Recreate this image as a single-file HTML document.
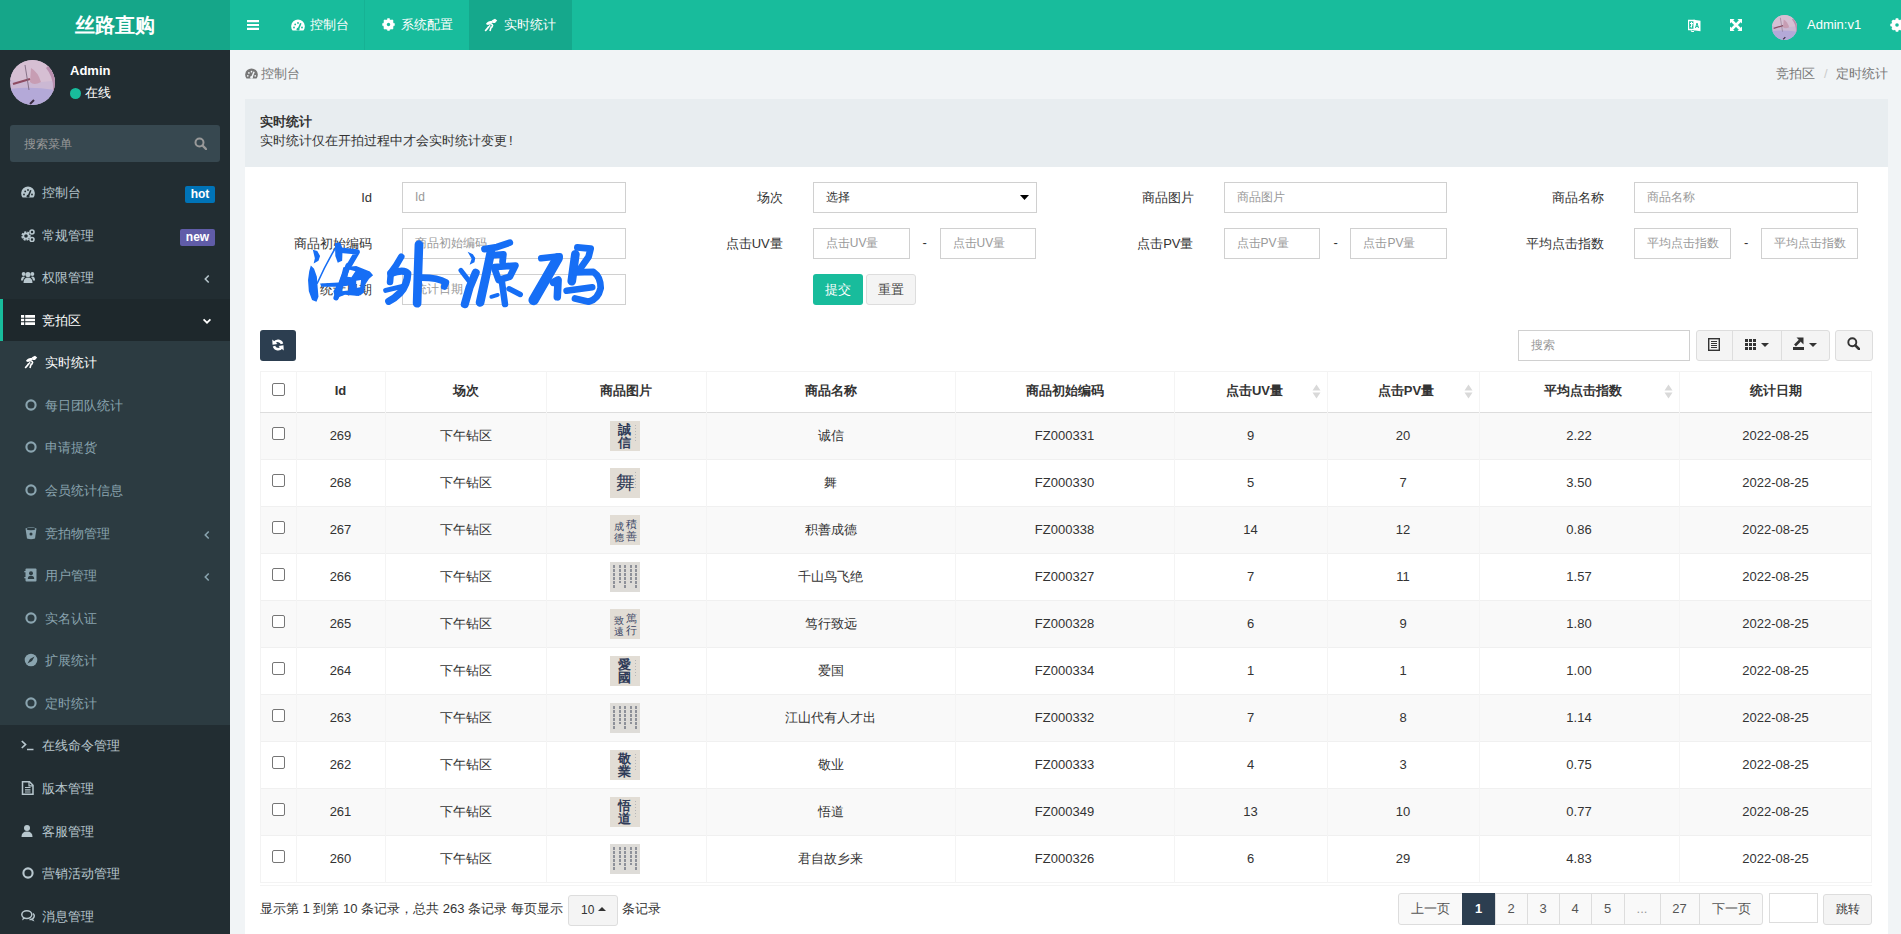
<!DOCTYPE html><html><head><meta charset="utf-8"><style>
*{box-sizing:border-box;margin:0;padding:0}
html,body{width:1901px;height:934px;overflow:hidden}
body{font-family:"Liberation Sans",sans-serif;font-size:13px;color:#333;background:#f1f4f6;position:relative;line-height:1.42857}
.a{position:absolute}
svg{display:block;position:absolute}
#logo{left:0;top:0;width:230px;height:50px;background:#15a689;color:#fff;font-size:20px;font-weight:bold;text-align:center;line-height:50px}
#nav{left:230px;top:0;width:1671px;height:50px;background:#18bc9c;color:#fff}
.tx{position:absolute;white-space:nowrap;line-height:20px}
#side{left:0;top:50px;width:230px;height:884px;background:#222d32}
.sm{color:#b8c7ce}
.badge{position:absolute;height:17px;line-height:17px;padding:0 4px;font-size:12px;font-weight:bold;color:#fff;border-radius:2px;text-align:center}
#panel{left:245px;top:99px;width:1643px;height:840px;background:#fff}
.lbl{position:absolute;text-align:right;line-height:31px;white-space:nowrap;color:#333}
.inp{position:absolute;height:31px;border:1px solid #d0d0d0;background:#fff;color:#999;line-height:29px;padding-left:12px;font-size:12px;white-space:nowrap;overflow:hidden}
.btn{position:absolute;border-radius:3px;text-align:center;white-space:nowrap}
table{border-collapse:collapse;table-layout:fixed;position:absolute}
td,th{text-align:center;vertical-align:middle;border-left:1px solid #f0f0f0;padding:0;white-space:nowrap}
th{font-weight:bold;height:41px}
td{height:47px}
tr.odd td{background:#f9f9f9}
tbody td{border-top:1px solid #eee}
.cb{display:inline-block;width:13px;height:13px;border:1px solid #767676;border-radius:2px;background:#fff;vertical-align:middle}
.thumb{display:inline-block;width:30px;height:30px;background:#ddd5c8;vertical-align:middle;position:relative;overflow:hidden}
.pg{position:absolute;top:893px;height:32px;line-height:30px;border:1px solid #ddd;background:#f4f4f4;color:#555;text-align:center}
</style></head><body>
<div id="logo" class="a">丝路直购</div>
<div id="nav" class="a">
<svg class="a" style="left:17px;top:20px" width="12" height="10" viewBox="0 0 12 10"><path d="M0 1.1H12M0 5H12M0 8.9H12" stroke="#fff" stroke-width="2.2"/></svg>
<div class="a" style="left:134px;top:0;width:1px;height:50px;background:rgba(0,0,0,0.05)"></div>
<div class="a" style="left:239px;top:0;width:103px;height:50px;background:rgba(0,0,0,0.1)"></div>
<svg class="a" style="left:61px;top:18px" width="14" height="14" viewBox="0 0 14 14"><path d="M1.6 12.5 A6.8 6.8 0 1 1 12.4 12.5 Z" fill="#fff"/><path d="M7 12 L9.8 5.2" stroke="#18bc9c" stroke-width="1.6"/><circle cx="7" cy="11.2" r="1.4" fill="#18bc9c"/><circle cx="3" cy="9.5" r="0.9" fill="#18bc9c"/><circle cx="4.2" cy="6.4" r="0.9" fill="#18bc9c"/><circle cx="7" cy="5" r="0.9" fill="#18bc9c"/><circle cx="11" cy="9.5" r="0.9" fill="#18bc9c"/></svg>
<div class="a tx" style="left:80px;top:15px;color:#fff">控制台</div>
<svg class="a" style="left:152px;top:18px" width="13" height="13" viewBox="0 0 14 14"><circle cx="7" cy="7" r="4.2" fill="none" stroke="#fff" stroke-width="3"/><path d="M7 0.3V13.7M0.3 7H13.7M2.3 2.3L11.7 11.7M11.7 2.3L2.3 11.7" stroke="#fff" stroke-width="2.6"/><circle cx="7" cy="7" r="1.8" fill="#18bc9c"/></svg>
<div class="a tx" style="left:171px;top:15px;color:#fff">系统配置</div>
<svg class="a" style="left:254px;top:18px" width="14" height="14" viewBox="0 0 14 14"><path d="M2.8 6.5 Q4.5 3.8 8.5 3.8" fill="none" stroke="#fff" stroke-width="2.2"/><path d="M8 2.2 L11 0.8 L13.2 2.6 L11 5 L8.5 5Z" fill="#fff"/><path d="M4 6 Q8.5 5 8.6 7.6 Q8 9.6 6.8 10 L6 13" fill="none" stroke="#fff" stroke-width="1.6"/><path d="M5 8.2 Q3.5 10.5 1.2 13" fill="none" stroke="#fff" stroke-width="1.7"/><path d="M5.2 7.2 Q6.5 7.8 5.5 9" fill="none" stroke="#fff" stroke-width="1.2"/></svg>
<div class="a tx" style="left:274px;top:15px;color:#fff">实时统计</div>
<svg class="a" style="left:1458px;top:19px" width="13" height="13" viewBox="0 0 13 13"><path d="M0.5 1.5H6.5V10.5H0.5Z" fill="none" stroke="#fff" stroke-width="1.3"/><path d="M5.5 0.8L12.5 1.8V12.2L5.5 11.2Z" fill="#fff"/><path d="M2 4.5H5 M3.5 3V8.5 M2.2 8.2L4.8 5.5" stroke="#fff" stroke-width="1"/><path d="M7.5 9L9 4L10.5 9M8 7.5H10" fill="none" stroke="#18bc9c" stroke-width="1"/><path d="M3 11.5Q4 13 6 12.5" fill="none" stroke="#fff" stroke-width="1.2"/></svg>
<svg class="a" style="left:1500px;top:19px" width="12" height="12" viewBox="0 0 12 12"><path d="M0 0H4.6L0 4.6Z M12 0H7.4L12 4.6Z M0 12H4.6L0 7.4Z M12 12H7.4L12 7.4Z" fill="#fff"/><path d="M1.5 1.5L10.5 10.5M10.5 1.5L1.5 10.5" stroke="#fff" stroke-width="2.6"/></svg>
<svg class="a" style="left:1542px;top:15px" width="25" height="25" viewBox="0 0 45 45"><defs><clipPath id="avc1542"><circle cx="22.5" cy="22.5" r="22.5"/></clipPath></defs><g clip-path="url(#avc1542)"><rect width="45" height="45" fill="#cbb8d3"/><path d="M0 0H45V20Q30 24 0 20Z" fill="#d6bfd3"/><path d="M0 29Q20 26 45 30V45H0Z" fill="#b4a9d8"/><path d="M36 8Q46 20 42 38L45 45V0Z" fill="#b98fae"/><path d="M21 8Q28 12 31 22Q24 26 20 22Z" fill="#c79db3"/><path d="M3 24L20 19" stroke="#8d4c62" stroke-width="2.2"/><path d="M15 5L19 30" stroke="#7e6a80" stroke-width="0.9"/><path d="M20 44L24 40" stroke="#3a2a3e" stroke-width="2"/></g></svg>
<div class="a tx" style="left:1577px;top:15px;color:#fff;font-size:13px">Admin:v1</div>
<svg class="a" style="left:1660px;top:18px" width="14" height="14" viewBox="0 0 14 14"><circle cx="7" cy="7" r="4.2" fill="none" stroke="#fff" stroke-width="3"/><path d="M7 0.3V13.7M0.3 7H13.7M2.3 2.3L11.7 11.7M11.7 2.3L2.3 11.7" stroke="#fff" stroke-width="2.6"/><circle cx="7" cy="7" r="1.8" fill="#18bc9c"/></svg>
</div>
<div id="side" class="a">
<svg class="a" style="left:10px;top:10px" width="45" height="45" viewBox="0 0 45 45"><defs><clipPath id="avc10"><circle cx="22.5" cy="22.5" r="22.5"/></clipPath></defs><g clip-path="url(#avc10)"><rect width="45" height="45" fill="#cbb8d3"/><path d="M0 0H45V20Q30 24 0 20Z" fill="#d6bfd3"/><path d="M0 29Q20 26 45 30V45H0Z" fill="#b4a9d8"/><path d="M36 8Q46 20 42 38L45 45V0Z" fill="#b98fae"/><path d="M21 8Q28 12 31 22Q24 26 20 22Z" fill="#c79db3"/><path d="M3 24L20 19" stroke="#8d4c62" stroke-width="2.2"/><path d="M15 5L19 30" stroke="#7e6a80" stroke-width="0.9"/><path d="M20 44L24 40" stroke="#3a2a3e" stroke-width="2"/></g></svg>
<div class="a tx" style="left:70px;top:11px;color:#fff;font-weight:bold;font-size:13px">Admin</div>
<div class="a" style="left:70px;top:38px;width:11px;height:11px;border-radius:50%;background:#18bc9c"></div>
<div class="a tx" style="left:85px;top:33px;color:#fff;font-size:13px">在线</div>
<div class="a" style="left:10px;top:75px;width:210px;height:37px;background:#374850;border-radius:3px"></div>
<div class="a tx" style="left:24px;top:84px;color:#999;font-size:12px">搜索菜单</div>
<svg class="a" style="left:194px;top:87px" width="13" height="13" viewBox="0 0 13 13"><circle cx="5.5" cy="5.5" r="4" fill="none" stroke="#999" stroke-width="2"/><path d="M8.5 8.5 L12 12" stroke="#999" stroke-width="2.4" stroke-linecap="round"/></svg>
<div class="a tx" style="left:42px;top:132.99px;color:#b8c7ce;font-weight:normal">控制台</div>
<svg class="a" style="left:21px;top:135px" width="14" height="14" viewBox="0 0 14 14"><path d="M1.6 12.5 A6.8 6.8 0 1 1 12.4 12.5 Z" fill="#b8c7ce"/><path d="M7 12 L9.8 5.2" stroke="#222d32" stroke-width="1.6"/><circle cx="7" cy="11.2" r="1.4" fill="#222d32"/><circle cx="3" cy="9.5" r="0.9" fill="#222d32"/><circle cx="4.2" cy="6.4" r="0.9" fill="#222d32"/><circle cx="7" cy="5" r="0.9" fill="#222d32"/><circle cx="11" cy="9.5" r="0.9" fill="#222d32"/></svg>
<div class="badge" style="left:185px;top:135.99px;width:30px;background:#0073b7">hot</div>
<div class="a tx" style="left:42px;top:175.56px;color:#b8c7ce;font-weight:normal">常规管理</div>
<svg class="a" style="left:21px;top:178px" width="14" height="14" viewBox="0 0 14 14"><circle cx="5" cy="8" r="3.4" fill="none" stroke="#b8c7ce" stroke-width="2.6" stroke-dasharray="1.8 1"/><circle cx="5" cy="8" r="2.6" fill="none" stroke="#b8c7ce" stroke-width="1.6"/><circle cx="11" cy="4" r="2" fill="none" stroke="#b8c7ce" stroke-width="1.6"/><circle cx="11" cy="11.5" r="2" fill="none" stroke="#b8c7ce" stroke-width="1.6"/></svg>
<div class="badge" style="left:180px;top:178.56px;width:35px;background:#605ca8">new</div>
<div class="a tx" style="left:42px;top:218.12px;color:#b8c7ce;font-weight:normal">权限管理</div>
<svg class="a" style="left:21px;top:220px" width="14" height="14" viewBox="0 0 14 14"><circle cx="7" cy="4.5" r="2.6" fill="#b8c7ce"/><path d="M2.5 13 Q2.5 7.5 7 7.5 Q11.5 7.5 11.5 13Z" fill="#b8c7ce"/><circle cx="2.6" cy="4" r="1.9" fill="#b8c7ce"/><circle cx="11.4" cy="4" r="1.9" fill="#b8c7ce"/><path d="M0 10.5 Q0 6.5 2.6 6.5 L4 7 Q2 8.5 2 10.5Z" fill="#b8c7ce"/><path d="M14 10.5 Q14 6.5 11.4 6.5 L10 7 Q12 8.5 12 10.5Z" fill="#b8c7ce"/></svg>
<svg class="a" style="left:201px;top:223px" width="12" height="12" viewBox="0 0 14 14"><path d="M9 3 L5 7 L9 11" fill="none" stroke="#b8c7ce" stroke-width="1.8"/></svg>
<div class="a" style="left:0;top:249.41px;width:230px;height:42.07px;background:#1e282c;border-left:3px solid #18bc9c"></div>
<div class="a tx" style="left:42px;top:260.70px;color:#fff;font-weight:normal">竞拍区</div>
<svg class="a" style="left:21px;top:263px" width="14" height="14" viewBox="0 0 14 14"><path d="M0 2h3.2v2.7h-3.2zM4.2 2h9.8v2.7h-9.8zM0 5.65h3.2v2.7h-3.2zM4.2 5.65h9.8v2.7h-9.8zM0 9.3h3.2v2.7h-3.2zM4.2 9.3h9.8v2.7h-9.8z" fill="#fff"/></svg>
<svg class="a" style="left:201px;top:265px" width="12" height="12" viewBox="0 0 14 14"><path d="M3 5 L7 9 L11 5" fill="none" stroke="#fff" stroke-width="2"/></svg>
<div class="a" style="left:0;top:290.98px;width:230px;height:43.07px;background:#2c3b41"></div>
<div class="a tx" style="left:45px;top:303.27px;color:#fff;font-weight:normal">实时统计</div>
<svg class="a" style="left:24px;top:305px" width="14" height="14" viewBox="0 0 14 14"><path d="M2.8 6.5 Q4.5 3.8 8.5 3.8" fill="none" stroke="#fff" stroke-width="2.2"/><path d="M8 2.2 L11 0.8 L13.2 2.6 L11 5 L8.5 5Z" fill="#fff"/><path d="M4 6 Q8.5 5 8.6 7.6 Q8 9.6 6.8 10 L6 13" fill="none" stroke="#fff" stroke-width="1.6"/><path d="M5 8.2 Q3.5 10.5 1.2 13" fill="none" stroke="#fff" stroke-width="1.7"/><path d="M5.2 7.2 Q6.5 7.8 5.5 9" fill="none" stroke="#fff" stroke-width="1.2"/></svg>
<div class="a" style="left:0;top:333.55px;width:230px;height:43.07px;background:#2c3b41"></div>
<div class="a tx" style="left:45px;top:345.84px;color:#8aa4af;font-weight:normal">每日团队统计</div>
<svg class="a" style="left:24px;top:348px" width="14" height="14" viewBox="0 0 14 14"><circle cx="7" cy="7" r="4.6" fill="none" stroke="#8aa4af" stroke-width="2.1"/></svg>
<div class="a" style="left:0;top:376.12px;width:230px;height:43.07px;background:#2c3b41"></div>
<div class="a tx" style="left:45px;top:388.41px;color:#8aa4af;font-weight:normal">申请提货</div>
<svg class="a" style="left:24px;top:390px" width="14" height="14" viewBox="0 0 14 14"><circle cx="7" cy="7" r="4.6" fill="none" stroke="#8aa4af" stroke-width="2.1"/></svg>
<div class="a" style="left:0;top:418.69px;width:230px;height:43.07px;background:#2c3b41"></div>
<div class="a tx" style="left:45px;top:430.98px;color:#8aa4af;font-weight:normal">会员统计信息</div>
<svg class="a" style="left:24px;top:433px" width="14" height="14" viewBox="0 0 14 14"><circle cx="7" cy="7" r="4.6" fill="none" stroke="#8aa4af" stroke-width="2.1"/></svg>
<div class="a" style="left:0;top:461.26px;width:230px;height:43.07px;background:#2c3b41"></div>
<div class="a tx" style="left:45px;top:473.55px;color:#8aa4af;font-weight:normal">竞拍物管理</div>
<svg class="a" style="left:24px;top:476px" width="14" height="14" viewBox="0 0 14 14"><path d="M1.5 2.5 Q7 0 12.5 2.5 L11 12.5 Q7 14 3 12.5Z" fill="#8aa4af"/><ellipse cx="7" cy="3" rx="4.3" ry="1.2" fill="#2c3b41"/><circle cx="7" cy="8" r="1.5" fill="#2c3b41"/></svg>
<svg class="a" style="left:201px;top:479px" width="12" height="12" viewBox="0 0 14 14"><path d="M9 3 L5 7 L9 11" fill="none" stroke="#8aa4af" stroke-width="1.8"/></svg>
<div class="a" style="left:0;top:503.83px;width:230px;height:43.07px;background:#2c3b41"></div>
<div class="a tx" style="left:45px;top:516.12px;color:#8aa4af;font-weight:normal">用户管理</div>
<svg class="a" style="left:24px;top:518px" width="14" height="14" viewBox="0 0 14 14"><rect x="1.5" y="0.5" width="11" height="13" rx="1" fill="#8aa4af"/><circle cx="7" cy="5.2" r="2" fill="#2c3b41"/><path d="M3.8 11 Q3.8 7.8 7 7.8 Q10.2 7.8 10.2 11Z" fill="#2c3b41"/><rect x="0.3" y="3" width="2" height="1.3" fill="#8aa4af"/><rect x="0.3" y="9" width="2" height="1.3" fill="#8aa4af"/></svg>
<svg class="a" style="left:201px;top:521px" width="12" height="12" viewBox="0 0 14 14"><path d="M9 3 L5 7 L9 11" fill="none" stroke="#8aa4af" stroke-width="1.8"/></svg>
<div class="a" style="left:0;top:546.40px;width:230px;height:43.07px;background:#2c3b41"></div>
<div class="a tx" style="left:45px;top:558.68px;color:#8aa4af;font-weight:normal">实名认证</div>
<svg class="a" style="left:24px;top:561px" width="14" height="14" viewBox="0 0 14 14"><circle cx="7" cy="7" r="4.6" fill="none" stroke="#8aa4af" stroke-width="2.1"/></svg>
<div class="a" style="left:0;top:588.97px;width:230px;height:43.07px;background:#2c3b41"></div>
<div class="a tx" style="left:45px;top:601.25px;color:#8aa4af;font-weight:normal">扩展统计</div>
<svg class="a" style="left:24px;top:603px" width="14" height="14" viewBox="0 0 14 14"><circle cx="7" cy="7" r="6.3" fill="#8aa4af"/><path d="M10.5 3.5 L8 8 L3.5 10.5 L6 6Z" fill="#2c3b41"/></svg>
<div class="a" style="left:0;top:631.54px;width:230px;height:43.07px;background:#2c3b41"></div>
<div class="a tx" style="left:45px;top:643.83px;color:#8aa4af;font-weight:normal">定时统计</div>
<svg class="a" style="left:24px;top:646px" width="14" height="14" viewBox="0 0 14 14"><circle cx="7" cy="7" r="4.6" fill="none" stroke="#8aa4af" stroke-width="2.1"/></svg>
<div class="a tx" style="left:42px;top:686.39px;color:#b8c7ce;font-weight:normal">在线命令管理</div>
<svg class="a" style="left:21px;top:688px" width="14" height="14" viewBox="0 0 14 14"><path d="M0.8 3 L4.5 6.5 L0.8 10" fill="none" stroke="#b8c7ce" stroke-width="1.7"/><path d="M6 11.5 H12.5" stroke="#b8c7ce" stroke-width="1.5"/></svg>
<div class="a tx" style="left:42px;top:728.97px;color:#b8c7ce;font-weight:normal">版本管理</div>
<svg class="a" style="left:21px;top:731px" width="14" height="14" viewBox="0 0 14 14"><path d="M1.5 0.8 H8.5 L12 4.3 V13.2 H1.5Z" fill="none" stroke="#b8c7ce" stroke-width="1.5"/><path d="M4 6.5 H9.5 M4 8.8 H9.5 M4 11 H9.5" stroke="#b8c7ce" stroke-width="1.2"/><path d="M8 1 V4.8 H12" fill="none" stroke="#b8c7ce" stroke-width="1.2"/></svg>
<div class="a tx" style="left:42px;top:771.53px;color:#b8c7ce;font-weight:normal">客服管理</div>
<svg class="a" style="left:21px;top:774px" width="14" height="14" viewBox="0 0 14 14"><circle cx="6" cy="4" r="3" fill="#b8c7ce"/><path d="M0.5 13 Q0.5 7.5 6 7.5 Q11.5 7.5 11.5 13Z" fill="#b8c7ce"/></svg>
<div class="a tx" style="left:42px;top:814.11px;color:#b8c7ce;font-weight:normal">营销活动管理</div>
<svg class="a" style="left:21px;top:816px" width="14" height="14" viewBox="0 0 14 14"><circle cx="7" cy="7" r="4.6" fill="none" stroke="#b8c7ce" stroke-width="2.1"/></svg>
<div class="a tx" style="left:42px;top:856.68px;color:#b8c7ce;font-weight:normal">消息管理</div>
<svg class="a" style="left:21px;top:859px" width="14" height="14" viewBox="0 0 14 14"><ellipse cx="5.8" cy="5.6" rx="5" ry="3.9" fill="none" stroke="#b8c7ce" stroke-width="1.5"/><path d="M2 8.5 L1 11.5 L4.5 9.2" fill="#b8c7ce"/><path d="M8.5 10.5 Q12 10.8 13 8 Q13.8 6 12 4.5" fill="none" stroke="#b8c7ce" stroke-width="1.5"/><path d="M12 10 L13.5 12.5 L10 11" fill="#b8c7ce"/></svg>
</div>
<svg class="a" style="left:245px;top:67px" width="13" height="13" viewBox="0 0 14 14"><path d="M1.6 12.5 A6.8 6.8 0 1 1 12.4 12.5 Z" fill="#777"/><path d="M7 12 L9.8 5.2" stroke="#f1f4f6" stroke-width="1.6"/><circle cx="7" cy="11.2" r="1.4" fill="#f1f4f6"/><circle cx="3" cy="9.5" r="0.9" fill="#f1f4f6"/><circle cx="4.2" cy="6.4" r="0.9" fill="#f1f4f6"/><circle cx="7" cy="5" r="0.9" fill="#f1f4f6"/><circle cx="11" cy="9.5" r="0.9" fill="#f1f4f6"/></svg>
<div class="a tx" style="left:261px;top:64px;color:#777">控制台</div>
<div class="a tx" style="left:1776px;top:64px;color:#777">竞拍区<span style="color:#ccc;padding:0 8px 0 9px">/</span>定时统计</div>
<div id="panel" class="a">
<div class="a" style="left:0;top:0;width:1643px;height:68px;background:#e8edf0"></div>
<div class="a tx" style="left:15px;top:13px;font-weight:bold;color:#333">实时统计</div>
<div class="a tx" style="left:15px;top:32px;color:#333">实时统计仅在开拍过程中才会实时统计变更<span style="margin-left:2px">!</span></div>
<div class="lbl" style="right:1516px;top:83px">Id</div>
<div class="inp" style="left:157.00px;top:83px;width:223.75px">Id</div>
<div class="lbl" style="right:1105.25px;top:83px">场次</div>
<div class="inp" style="left:567.75px;top:83px;width:223.75px"><span style="color:#333">选择</span><svg class="a" style="right:7px;top:12px" width="9" height="5" viewBox="0 0 9 5"><path d="M0 0H9L4.5 5Z" fill="#000"/></svg></div>
<div class="lbl" style="right:694.5px;top:83px">商品图片</div>
<div class="inp" style="left:978.50px;top:83px;width:223.75px">商品图片</div>
<div class="lbl" style="right:283.75px;top:83px">商品名称</div>
<div class="inp" style="left:1389.25px;top:83px;width:223.75px">商品名称</div>
<div class="lbl" style="right:1516px;top:129px">商品初始编码</div>
<div class="inp" style="left:157.00px;top:129px;width:223.75px">商品初始编码</div>
<div class="lbl" style="right:1105.25px;top:129px">点击UV量</div>
<div class="inp" style="left:567.75px;top:129px;width:96.88px">点击UV量</div>
<div class="inp" style="left:694.62px;top:129px;width:96.88px">点击UV量</div>
<div class="a tx" style="left:677.62px;top:134px;color:#333">-</div>
<div class="lbl" style="right:694.5px;top:129px">点击PV量</div>
<div class="inp" style="left:978.50px;top:129px;width:96.88px">点击PV量</div>
<div class="inp" style="left:1105.38px;top:129px;width:96.88px">点击PV量</div>
<div class="a tx" style="left:1088.38px;top:134px;color:#333">-</div>
<div class="lbl" style="right:283.75px;top:129px">平均点击指数</div>
<div class="inp" style="left:1389.25px;top:129px;width:96.88px">平均点击指数</div>
<div class="inp" style="left:1516.12px;top:129px;width:96.88px">平均点击指数</div>
<div class="a tx" style="left:1499.12px;top:134px;color:#333">-</div>
<div class="lbl" style="right:1516px;top:175px">统计日期</div>
<div class="inp" style="left:157.00px;top:175px;width:223.75px">统计日期</div>
<div class="btn" style="left:568px;top:175px;width:50px;height:31px;line-height:31px;background:#18bc9c;color:#fff">提交</div>
<div class="btn" style="left:621px;top:175px;width:50px;height:31px;line-height:29px;background:#f4f4f4;border:1px solid #ddd;color:#444">重置</div>
</div>
<div class="a" style="left:0;top:0">
<div class="a" style="left:260px;top:330px;width:36px;height:31px;background:#2c3e50;border-radius:3px"></div>
<svg class="a" style="left:272px;top:339px" width="12" height="12" viewBox="0 0 12 12"><path d="M10 4.8 A4.2 4.2 0 0 0 2.4 3.8" fill="none" stroke="#fff" stroke-width="2.6"/><path d="M0.3 0.5 L0.5 5.8 L5.5 5Z" fill="#fff"/><path d="M2 7.2 A4.2 4.2 0 0 0 9.6 8.2" fill="none" stroke="#fff" stroke-width="2.6"/><path d="M11.7 11.5 L11.5 6.2 L6.5 7Z" fill="#fff"/></svg>
<div class="inp" style="left:1518px;top:330px;width:172px;height:31px;padding-left:12px">搜索</div>
<div class="a" style="left:1696px;top:330px;width:134px;height:31px;background:#f4f4f4;border:1px solid #ddd;border-radius:3px"></div>
<div class="a" style="left:1732px;top:331px;width:1px;height:29px;background:#ddd"></div>
<div class="a" style="left:1781px;top:331px;width:1px;height:29px;background:#ddd"></div>
<div class="a" style="left:1835px;top:330px;width:38px;height:31px;background:#f4f4f4;border:1px solid #ddd;border-radius:3px"></div>
<svg class="a" style="left:1708px;top:338px" width="12" height="13" viewBox="0 0 12 13"><rect x="0.7" y="0.7" width="10.6" height="11.6" fill="none" stroke="#333" stroke-width="1.4"/><path d="M3 3.5H9M3 5.5H9M3 7.5H9M3 9.5H9" stroke="#333" stroke-width="1"/></svg>
<svg class="a" style="left:1745px;top:339px" width="11" height="11" viewBox="0 0 11 11"><path d="M0 0h3v3h-3zM4 0h3v3h-3zM8 0h3v3h-3zM0 4h3v3h-3zM4 4h3v3h-3zM8 4h3v3h-3zM0 8h3v3h-3zM4 8h3v3h-3zM8 8h3v3h-3z" fill="#333"/></svg>
<svg class="a" style="left:1761px;top:343px" width="8" height="4" viewBox="0 0 8 4"><path d="M0 0H8L4 4Z" fill="#333"/></svg>
<svg class="a" style="left:1793px;top:337px" width="12" height="13" viewBox="0 0 12 13"><path d="M0 10H11V13H0Z" fill="#333"/><path d="M2 8.5 L7 3.5" stroke="#333" stroke-width="2.6"/><path d="M3.5 0.5H10.5V7.5Z" fill="#333"/></svg>
<svg class="a" style="left:1809px;top:343px" width="8" height="4" viewBox="0 0 8 4"><path d="M0 0H8L4 4Z" fill="#333"/></svg>
<svg class="a" style="left:1847px;top:337px" width="13" height="13" viewBox="0 0 13 13"><circle cx="5.3" cy="5.3" r="4" fill="none" stroke="#333" stroke-width="1.9"/><path d="M8.3 8.3L12 12" stroke="#333" stroke-width="2.6" stroke-linecap="round"/></svg>
<div class="a" style="left:260px;top:371px;width:1612px;height:512px;background:#fff;border:1px solid #f3f3f3"></div>
<div class="a" style="left:261px;top:413px;width:1610px;height:46px;background:#f9f9f9"></div>
<div class="a" style="left:261px;top:459px;width:1610px;height:1px;background:#f0f0f0"></div>
<div class="a" style="left:261px;top:507px;width:1610px;height:46px;background:#f9f9f9"></div>
<div class="a" style="left:261px;top:506px;width:1610px;height:1px;background:#f0f0f0"></div>
<div class="a" style="left:261px;top:553px;width:1610px;height:1px;background:#f0f0f0"></div>
<div class="a" style="left:261px;top:601px;width:1610px;height:46px;background:#f9f9f9"></div>
<div class="a" style="left:261px;top:600px;width:1610px;height:1px;background:#f0f0f0"></div>
<div class="a" style="left:261px;top:647px;width:1610px;height:1px;background:#f0f0f0"></div>
<div class="a" style="left:261px;top:695px;width:1610px;height:46px;background:#f9f9f9"></div>
<div class="a" style="left:261px;top:694px;width:1610px;height:1px;background:#f0f0f0"></div>
<div class="a" style="left:261px;top:741px;width:1610px;height:1px;background:#f0f0f0"></div>
<div class="a" style="left:261px;top:789px;width:1610px;height:46px;background:#f9f9f9"></div>
<div class="a" style="left:261px;top:788px;width:1610px;height:1px;background:#f0f0f0"></div>
<div class="a" style="left:261px;top:835px;width:1610px;height:1px;background:#f0f0f0"></div>
<div class="a" style="left:260px;top:412px;width:1612px;height:1px;background:#ddd"></div>
<div class="a" style="left:296.0px;top:371px;width:1px;height:512px;background:#f4f4f4"></div>
<div class="a" style="left:385.0px;top:371px;width:1px;height:512px;background:#f4f4f4"></div>
<div class="a" style="left:546.0px;top:371px;width:1px;height:512px;background:#f4f4f4"></div>
<div class="a" style="left:706.0px;top:371px;width:1px;height:512px;background:#f4f4f4"></div>
<div class="a" style="left:955.0px;top:371px;width:1px;height:512px;background:#f4f4f4"></div>
<div class="a" style="left:1174.0px;top:371px;width:1px;height:512px;background:#f4f4f4"></div>
<div class="a" style="left:1327.0px;top:371px;width:1px;height:512px;background:#f4f4f4"></div>
<div class="a" style="left:1479.0px;top:371px;width:1px;height:512px;background:#f4f4f4"></div>
<div class="a" style="left:1679.0px;top:371px;width:1px;height:512px;background:#f4f4f4"></div>
<div class="a cb" style="left:272px;top:383px"></div>
<div class="a tx" style="left:296.0px;width:89.0px;top:381px;text-align:center;font-weight:bold;color:#333">Id</div>
<div class="a tx" style="left:385.0px;width:161.0px;top:381px;text-align:center;font-weight:bold;color:#333">场次</div>
<div class="a tx" style="left:546.0px;width:160.0px;top:381px;text-align:center;font-weight:bold;color:#333">商品图片</div>
<div class="a tx" style="left:706.0px;width:249.0px;top:381px;text-align:center;font-weight:bold;color:#333">商品名称</div>
<div class="a tx" style="left:955.0px;width:219.0px;top:381px;text-align:center;font-weight:bold;color:#333">商品初始编码</div>
<div class="a tx" style="left:1178.0px;width:153.0px;top:381px;text-align:center;font-weight:bold;color:#333">点击UV量</div>
<svg class="a" style="left:1312.0px;top:384px" width="9" height="15" viewBox="0 0 9 15"><path d="M4.5 0.5L8.5 6.5H0.5Z M4.5 14.5L8.5 8.5H0.5Z" fill="#d9d9d9"/></svg>
<div class="a tx" style="left:1330.0px;width:152.0px;top:381px;text-align:center;font-weight:bold;color:#333">点击PV量</div>
<svg class="a" style="left:1464.0px;top:384px" width="9" height="15" viewBox="0 0 9 15"><path d="M4.5 0.5L8.5 6.5H0.5Z M4.5 14.5L8.5 8.5H0.5Z" fill="#d9d9d9"/></svg>
<div class="a tx" style="left:1482.5px;width:200.0px;top:381px;text-align:center;font-weight:bold;color:#333">平均点击指数</div>
<svg class="a" style="left:1664.0px;top:384px" width="9" height="15" viewBox="0 0 9 15"><path d="M4.5 0.5L8.5 6.5H0.5Z M4.5 14.5L8.5 8.5H0.5Z" fill="#d9d9d9"/></svg>
<div class="a tx" style="left:1679.0px;width:193.0px;top:381px;text-align:center;font-weight:bold;color:#333">统计日期</div>
<div class="a cb" style="left:272px;top:426.5px"></div>
<div class="a tx" style="left:296.0px;width:89.0px;top:425.5px;text-align:center;color:#333">269</div>
<div class="a tx" style="left:385.0px;width:161.0px;top:425.5px;text-align:center;color:#333">下午钻区</div>
<div class="a tx" style="left:706.0px;width:249.0px;top:425.5px;text-align:center;color:#333">诚信</div>
<div class="a tx" style="left:955.0px;width:219.0px;top:425.5px;text-align:center;color:#333">FZ000331</div>
<div class="a tx" style="left:1174.0px;width:153.0px;top:425.5px;text-align:center;color:#333">9</div>
<div class="a tx" style="left:1327.0px;width:152.0px;top:425.5px;text-align:center;color:#333">20</div>
<div class="a tx" style="left:1479.0px;width:200.0px;top:425.5px;text-align:center;color:#333">2.22</div>
<div class="a tx" style="left:1679.0px;width:193.0px;top:425.5px;text-align:center;color:#333">2022-08-25</div>
<div class="a" style="left:610px;top:421px;width:30px;height:30px;background:#e2ddd5;overflow:hidden"><div class="a" style="left:25px;top:4px;width:1px;height:18px;background:repeating-linear-gradient(#8a8f9a 0 1px,transparent 1px 3px);opacity:0.5"></div><div class="a" style="left:8px;top:2px;width:15px;font-size:13px;line-height:13px;font-weight:bold;color:#2f3b58;white-space:normal;word-break:break-all">誠信</div></div>
<div class="a cb" style="left:272px;top:473.5px"></div>
<div class="a tx" style="left:296.0px;width:89.0px;top:472.5px;text-align:center;color:#333">268</div>
<div class="a tx" style="left:385.0px;width:161.0px;top:472.5px;text-align:center;color:#333">下午钻区</div>
<div class="a tx" style="left:706.0px;width:249.0px;top:472.5px;text-align:center;color:#333">舞</div>
<div class="a tx" style="left:955.0px;width:219.0px;top:472.5px;text-align:center;color:#333">FZ000330</div>
<div class="a tx" style="left:1174.0px;width:153.0px;top:472.5px;text-align:center;color:#333">5</div>
<div class="a tx" style="left:1327.0px;width:152.0px;top:472.5px;text-align:center;color:#333">7</div>
<div class="a tx" style="left:1479.0px;width:200.0px;top:472.5px;text-align:center;color:#333">3.50</div>
<div class="a tx" style="left:1679.0px;width:193.0px;top:472.5px;text-align:center;color:#333">2022-08-25</div>
<div class="a" style="left:610px;top:468px;width:30px;height:30px;background:#e2ddd5;overflow:hidden"><div class="a" style="left:25px;top:4px;width:1px;height:18px;background:repeating-linear-gradient(#8a8f9a 0 1px,transparent 1px 3px);opacity:0.5"></div><div class="a" style="left:6px;top:2px;font-size:19px;line-height:26px;color:#34405a">舞</div></div>
<div class="a cb" style="left:272px;top:520.5px"></div>
<div class="a tx" style="left:296.0px;width:89.0px;top:519.5px;text-align:center;color:#333">267</div>
<div class="a tx" style="left:385.0px;width:161.0px;top:519.5px;text-align:center;color:#333">下午钻区</div>
<div class="a tx" style="left:706.0px;width:249.0px;top:519.5px;text-align:center;color:#333">积善成德</div>
<div class="a tx" style="left:955.0px;width:219.0px;top:519.5px;text-align:center;color:#333">FZ000338</div>
<div class="a tx" style="left:1174.0px;width:153.0px;top:519.5px;text-align:center;color:#333">14</div>
<div class="a tx" style="left:1327.0px;width:152.0px;top:519.5px;text-align:center;color:#333">12</div>
<div class="a tx" style="left:1479.0px;width:200.0px;top:519.5px;text-align:center;color:#333">0.86</div>
<div class="a tx" style="left:1679.0px;width:193.0px;top:519.5px;text-align:center;color:#333">2022-08-25</div>
<div class="a" style="left:610px;top:515px;width:30px;height:30px;background:#e2ddd5;overflow:hidden"><div class="a" style="left:16px;top:3px;width:11px;font-size:11px;line-height:12px;color:#3d4866;white-space:normal;word-break:break-all">積善</div><div class="a" style="left:4px;top:6px;width:11px;font-size:10px;line-height:11px;color:#3d4866;white-space:normal;word-break:break-all">成德</div></div>
<div class="a cb" style="left:272px;top:567.5px"></div>
<div class="a tx" style="left:296.0px;width:89.0px;top:566.5px;text-align:center;color:#333">266</div>
<div class="a tx" style="left:385.0px;width:161.0px;top:566.5px;text-align:center;color:#333">下午钻区</div>
<div class="a tx" style="left:706.0px;width:249.0px;top:566.5px;text-align:center;color:#333">千山鸟飞绝</div>
<div class="a tx" style="left:955.0px;width:219.0px;top:566.5px;text-align:center;color:#333">FZ000327</div>
<div class="a tx" style="left:1174.0px;width:153.0px;top:566.5px;text-align:center;color:#333">7</div>
<div class="a tx" style="left:1327.0px;width:152.0px;top:566.5px;text-align:center;color:#333">11</div>
<div class="a tx" style="left:1479.0px;width:200.0px;top:566.5px;text-align:center;color:#333">1.57</div>
<div class="a tx" style="left:1679.0px;width:193.0px;top:566.5px;text-align:center;color:#333">2022-08-25</div>
<div class="a" style="left:610px;top:562px;width:30px;height:30px;background:#dedcd8;overflow:hidden"><div class="a" style="left:3px;top:3px;width:2px;height:24px;background:repeating-linear-gradient(#4d5466 0 3px,transparent 3px 4px);opacity:0.55"></div><div class="a" style="left:8.5px;top:3px;width:2px;height:18px;background:repeating-linear-gradient(#4d5466 0 3px,transparent 3px 4px);opacity:0.55"></div><div class="a" style="left:14px;top:3px;width:2px;height:24px;background:repeating-linear-gradient(#4d5466 0 3px,transparent 3px 4px);opacity:0.55"></div><div class="a" style="left:19.5px;top:3px;width:2px;height:18px;background:repeating-linear-gradient(#4d5466 0 3px,transparent 3px 4px);opacity:0.55"></div><div class="a" style="left:25px;top:3px;width:2px;height:24px;background:repeating-linear-gradient(#4d5466 0 3px,transparent 3px 4px);opacity:0.55"></div></div>
<div class="a cb" style="left:272px;top:614.5px"></div>
<div class="a tx" style="left:296.0px;width:89.0px;top:613.5px;text-align:center;color:#333">265</div>
<div class="a tx" style="left:385.0px;width:161.0px;top:613.5px;text-align:center;color:#333">下午钻区</div>
<div class="a tx" style="left:706.0px;width:249.0px;top:613.5px;text-align:center;color:#333">笃行致远</div>
<div class="a tx" style="left:955.0px;width:219.0px;top:613.5px;text-align:center;color:#333">FZ000328</div>
<div class="a tx" style="left:1174.0px;width:153.0px;top:613.5px;text-align:center;color:#333">6</div>
<div class="a tx" style="left:1327.0px;width:152.0px;top:613.5px;text-align:center;color:#333">9</div>
<div class="a tx" style="left:1479.0px;width:200.0px;top:613.5px;text-align:center;color:#333">1.80</div>
<div class="a tx" style="left:1679.0px;width:193.0px;top:613.5px;text-align:center;color:#333">2022-08-25</div>
<div class="a" style="left:610px;top:609px;width:30px;height:30px;background:#e2ddd5;overflow:hidden"><div class="a" style="left:16px;top:3px;width:11px;font-size:11px;line-height:12px;color:#3d4866;white-space:normal;word-break:break-all">篤行</div><div class="a" style="left:4px;top:6px;width:11px;font-size:10px;line-height:11px;color:#3d4866;white-space:normal;word-break:break-all">致遠</div></div>
<div class="a cb" style="left:272px;top:661.5px"></div>
<div class="a tx" style="left:296.0px;width:89.0px;top:660.5px;text-align:center;color:#333">264</div>
<div class="a tx" style="left:385.0px;width:161.0px;top:660.5px;text-align:center;color:#333">下午钻区</div>
<div class="a tx" style="left:706.0px;width:249.0px;top:660.5px;text-align:center;color:#333">爱国</div>
<div class="a tx" style="left:955.0px;width:219.0px;top:660.5px;text-align:center;color:#333">FZ000334</div>
<div class="a tx" style="left:1174.0px;width:153.0px;top:660.5px;text-align:center;color:#333">1</div>
<div class="a tx" style="left:1327.0px;width:152.0px;top:660.5px;text-align:center;color:#333">1</div>
<div class="a tx" style="left:1479.0px;width:200.0px;top:660.5px;text-align:center;color:#333">1.00</div>
<div class="a tx" style="left:1679.0px;width:193.0px;top:660.5px;text-align:center;color:#333">2022-08-25</div>
<div class="a" style="left:610px;top:656px;width:30px;height:30px;background:#e2ddd5;overflow:hidden"><div class="a" style="left:25px;top:4px;width:1px;height:18px;background:repeating-linear-gradient(#8a8f9a 0 1px,transparent 1px 3px);opacity:0.5"></div><div class="a" style="left:8px;top:2px;width:15px;font-size:13px;line-height:13px;font-weight:bold;color:#2f3b58;white-space:normal;word-break:break-all">愛國</div></div>
<div class="a cb" style="left:272px;top:708.5px"></div>
<div class="a tx" style="left:296.0px;width:89.0px;top:707.5px;text-align:center;color:#333">263</div>
<div class="a tx" style="left:385.0px;width:161.0px;top:707.5px;text-align:center;color:#333">下午钻区</div>
<div class="a tx" style="left:706.0px;width:249.0px;top:707.5px;text-align:center;color:#333">江山代有人才出</div>
<div class="a tx" style="left:955.0px;width:219.0px;top:707.5px;text-align:center;color:#333">FZ000332</div>
<div class="a tx" style="left:1174.0px;width:153.0px;top:707.5px;text-align:center;color:#333">7</div>
<div class="a tx" style="left:1327.0px;width:152.0px;top:707.5px;text-align:center;color:#333">8</div>
<div class="a tx" style="left:1479.0px;width:200.0px;top:707.5px;text-align:center;color:#333">1.14</div>
<div class="a tx" style="left:1679.0px;width:193.0px;top:707.5px;text-align:center;color:#333">2022-08-25</div>
<div class="a" style="left:610px;top:703px;width:30px;height:30px;background:#dedcd8;overflow:hidden"><div class="a" style="left:3px;top:3px;width:2px;height:24px;background:repeating-linear-gradient(#4d5466 0 3px,transparent 3px 4px);opacity:0.55"></div><div class="a" style="left:8.5px;top:3px;width:2px;height:18px;background:repeating-linear-gradient(#4d5466 0 3px,transparent 3px 4px);opacity:0.55"></div><div class="a" style="left:14px;top:3px;width:2px;height:24px;background:repeating-linear-gradient(#4d5466 0 3px,transparent 3px 4px);opacity:0.55"></div><div class="a" style="left:19.5px;top:3px;width:2px;height:18px;background:repeating-linear-gradient(#4d5466 0 3px,transparent 3px 4px);opacity:0.55"></div><div class="a" style="left:25px;top:3px;width:2px;height:24px;background:repeating-linear-gradient(#4d5466 0 3px,transparent 3px 4px);opacity:0.55"></div></div>
<div class="a cb" style="left:272px;top:755.5px"></div>
<div class="a tx" style="left:296.0px;width:89.0px;top:754.5px;text-align:center;color:#333">262</div>
<div class="a tx" style="left:385.0px;width:161.0px;top:754.5px;text-align:center;color:#333">下午钻区</div>
<div class="a tx" style="left:706.0px;width:249.0px;top:754.5px;text-align:center;color:#333">敬业</div>
<div class="a tx" style="left:955.0px;width:219.0px;top:754.5px;text-align:center;color:#333">FZ000333</div>
<div class="a tx" style="left:1174.0px;width:153.0px;top:754.5px;text-align:center;color:#333">4</div>
<div class="a tx" style="left:1327.0px;width:152.0px;top:754.5px;text-align:center;color:#333">3</div>
<div class="a tx" style="left:1479.0px;width:200.0px;top:754.5px;text-align:center;color:#333">0.75</div>
<div class="a tx" style="left:1679.0px;width:193.0px;top:754.5px;text-align:center;color:#333">2022-08-25</div>
<div class="a" style="left:610px;top:750px;width:30px;height:30px;background:#e2ddd5;overflow:hidden"><div class="a" style="left:25px;top:4px;width:1px;height:18px;background:repeating-linear-gradient(#8a8f9a 0 1px,transparent 1px 3px);opacity:0.5"></div><div class="a" style="left:8px;top:2px;width:15px;font-size:13px;line-height:13px;font-weight:bold;color:#2f3b58;white-space:normal;word-break:break-all">敬業</div></div>
<div class="a cb" style="left:272px;top:802.5px"></div>
<div class="a tx" style="left:296.0px;width:89.0px;top:801.5px;text-align:center;color:#333">261</div>
<div class="a tx" style="left:385.0px;width:161.0px;top:801.5px;text-align:center;color:#333">下午钻区</div>
<div class="a tx" style="left:706.0px;width:249.0px;top:801.5px;text-align:center;color:#333">悟道</div>
<div class="a tx" style="left:955.0px;width:219.0px;top:801.5px;text-align:center;color:#333">FZ000349</div>
<div class="a tx" style="left:1174.0px;width:153.0px;top:801.5px;text-align:center;color:#333">13</div>
<div class="a tx" style="left:1327.0px;width:152.0px;top:801.5px;text-align:center;color:#333">10</div>
<div class="a tx" style="left:1479.0px;width:200.0px;top:801.5px;text-align:center;color:#333">0.77</div>
<div class="a tx" style="left:1679.0px;width:193.0px;top:801.5px;text-align:center;color:#333">2022-08-25</div>
<div class="a" style="left:610px;top:797px;width:30px;height:30px;background:#e2ddd5;overflow:hidden"><div class="a" style="left:25px;top:4px;width:1px;height:18px;background:repeating-linear-gradient(#8a8f9a 0 1px,transparent 1px 3px);opacity:0.5"></div><div class="a" style="left:8px;top:2px;width:15px;font-size:13px;line-height:13px;font-weight:bold;color:#2f3b58;white-space:normal;word-break:break-all">悟道</div></div>
<div class="a cb" style="left:272px;top:849.5px"></div>
<div class="a tx" style="left:296.0px;width:89.0px;top:848.5px;text-align:center;color:#333">260</div>
<div class="a tx" style="left:385.0px;width:161.0px;top:848.5px;text-align:center;color:#333">下午钻区</div>
<div class="a tx" style="left:706.0px;width:249.0px;top:848.5px;text-align:center;color:#333">君自故乡来</div>
<div class="a tx" style="left:955.0px;width:219.0px;top:848.5px;text-align:center;color:#333">FZ000326</div>
<div class="a tx" style="left:1174.0px;width:153.0px;top:848.5px;text-align:center;color:#333">6</div>
<div class="a tx" style="left:1327.0px;width:152.0px;top:848.5px;text-align:center;color:#333">29</div>
<div class="a tx" style="left:1479.0px;width:200.0px;top:848.5px;text-align:center;color:#333">4.83</div>
<div class="a tx" style="left:1679.0px;width:193.0px;top:848.5px;text-align:center;color:#333">2022-08-25</div>
<div class="a" style="left:610px;top:844px;width:30px;height:30px;background:#dedcd8;overflow:hidden"><div class="a" style="left:3px;top:3px;width:2px;height:24px;background:repeating-linear-gradient(#4d5466 0 3px,transparent 3px 4px);opacity:0.55"></div><div class="a" style="left:8.5px;top:3px;width:2px;height:18px;background:repeating-linear-gradient(#4d5466 0 3px,transparent 3px 4px);opacity:0.55"></div><div class="a" style="left:14px;top:3px;width:2px;height:24px;background:repeating-linear-gradient(#4d5466 0 3px,transparent 3px 4px);opacity:0.55"></div><div class="a" style="left:19.5px;top:3px;width:2px;height:18px;background:repeating-linear-gradient(#4d5466 0 3px,transparent 3px 4px);opacity:0.55"></div><div class="a" style="left:25px;top:3px;width:2px;height:24px;background:repeating-linear-gradient(#4d5466 0 3px,transparent 3px 4px);opacity:0.55"></div></div>
<div class="a" style="left:260px;top:885px;width:1612px;height:1px;background:#f4f4f4"></div>
<div class="a tx" style="left:260px;top:899px;color:#333">显示第 1 到第 10 条记录，总共 263 条记录 每页显示</div>
<div class="a" style="left:568px;top:895px;width:50px;height:31px;background:#f4f4f4;border:1px solid #ddd;border-radius:3px"></div>
<div class="a tx" style="left:581px;top:900px;color:#333;font-size:12px">10</div>
<svg class="a" style="left:598px;top:907px" width="8" height="4" viewBox="0 0 8 4"><path d="M0 4H8L4 0Z" fill="#333"/></svg>
<div class="a tx" style="left:622px;top:899px;color:#333">条记录</div>
<div class="a" style="left:1398px;top:893px;width:365px;height:32px;border:1px solid #ddd;border-radius:3px;background:#f9f9f9"></div>
<div class="a tx" style="left:1398px;top:899px;width:64px;text-align:center;color:#555">上一页</div>
<div class="a" style="left:1462px;top:894px;width:1px;height:30px;background:#ddd"></div>
<div class="a" style="left:1462px;top:893px;width:33px;height:32px;background:#2c3e50"></div>
<div class="a tx" style="left:1462px;top:899px;width:33px;text-align:center;color:#fff;font-weight:bold">1</div>
<div class="a" style="left:1495px;top:894px;width:1px;height:30px;background:#ddd"></div>
<div class="a tx" style="left:1495px;top:899px;width:32px;text-align:center;color:#555">2</div>
<div class="a" style="left:1527px;top:894px;width:1px;height:30px;background:#ddd"></div>
<div class="a tx" style="left:1527px;top:899px;width:32px;text-align:center;color:#555">3</div>
<div class="a" style="left:1559px;top:894px;width:1px;height:30px;background:#ddd"></div>
<div class="a tx" style="left:1559px;top:899px;width:32px;text-align:center;color:#555">4</div>
<div class="a" style="left:1591px;top:894px;width:1px;height:30px;background:#ddd"></div>
<div class="a tx" style="left:1591px;top:899px;width:33px;text-align:center;color:#555">5</div>
<div class="a" style="left:1624px;top:894px;width:1px;height:30px;background:#ddd"></div>
<div class="a tx" style="left:1624px;top:899px;width:36px;text-align:center;color:#999">...</div>
<div class="a" style="left:1660px;top:894px;width:1px;height:30px;background:#ddd"></div>
<div class="a tx" style="left:1660px;top:899px;width:39px;text-align:center;color:#555">27</div>
<div class="a" style="left:1699px;top:894px;width:1px;height:30px;background:#ddd"></div>
<div class="a tx" style="left:1699px;top:899px;width:64px;text-align:center;color:#555">下一页</div>
<div class="a" style="left:1769px;top:893px;width:49px;height:30px;border:1px solid #ddd;background:#fff"></div>
<div class="a" style="left:1823px;top:894px;width:49px;height:31px;border:1px solid #ddd;border-radius:3px;background:#f4f4f4"></div>
<div class="a tx" style="left:1823px;top:899px;width:49px;text-align:center;color:#333;font-size:12px">跳转</div>
</div>
<svg class="a" style="left:0;top:0" width="1901" height="934" viewBox="0 0 1901 934"><g transform="translate(300 235) scale(0.08032)"><path d="M160 185 L215 200 L250 260 L230 320 L170 355 L185 290 Z" fill="#166ef5"/><path d="M135 380 L175 420 L210 520 L220 650 L230 770 L205 830 L150 810 L110 700 L100 560 L115 450 Z" fill="#166ef5"/><path d="M480 100 Q340 320 215 600" fill="none" stroke="#166ef5" stroke-width="19" stroke-linecap="round" stroke-linejoin="round"/><path d="M435 100 L505 95 L530 170 L525 320 L470 345 L440 260 Z" fill="#166ef5"/><path d="M510 190 L712 210 L600 400" fill="none" stroke="#166ef5" stroke-width="68" stroke-linecap="round" stroke-linejoin="round"/><path fill-rule="evenodd" fill="#166ef5" d="M540 400 L700 385 L870 455 L910 500 L860 545 L810 620 L795 720 L730 760 L560 745 L440 790 L415 700 L450 645 L265 645 L250 605 L480 590 L520 480 Z M610 430 L690 450 L640 525 L590 520 Z M530 640 L610 630 L600 690 L520 700 Z M700 570 L760 560 L750 650 L700 660 Z"/><path d="M600 380 L450 780" fill="none" stroke="#166ef5" stroke-width="68" stroke-linecap="round" stroke-linejoin="round"/></g><g transform="translate(380 235) scale(0.08032)"><path d="M485 120 L472 500 L462 850" fill="none" stroke="#166ef5" stroke-width="108" stroke-linecap="round" stroke-linejoin="round"/><path d="M520 530 Q720 530 820 590 L800 640" fill="none" stroke="#166ef5" stroke-width="84" stroke-linecap="round" stroke-linejoin="round"/><path d="M265 270 L200 380 L135 470 L125 585" fill="none" stroke="#166ef5" stroke-width="81" stroke-linecap="round" stroke-linejoin="round"/><path d="M135 480 Q300 420 345 480 Q340 620 250 720 Q180 790 110 825" fill="none" stroke="#166ef5" stroke-width="92" stroke-linecap="round" stroke-linejoin="round"/><path d="M70 690 L280 640" fill="none" stroke="#166ef5" stroke-width="61" stroke-linecap="round" stroke-linejoin="round"/></g><g transform="translate(460 235) scale(0.08032)"><path d="M95 210 L160 240 L190 285 L180 340 L120 370 L145 295 Z" fill="#166ef5"/><path d="M10 440 L110 570" fill="none" stroke="#166ef5" stroke-width="61" stroke-linecap="round" stroke-linejoin="round"/><path d="M195 470 L120 650 L60 860" fill="none" stroke="#166ef5" stroke-width="101" stroke-linecap="round" stroke-linejoin="round"/><path d="M305 175 L460 150 L620 95" fill="none" stroke="#166ef5" stroke-width="84" stroke-linecap="round" stroke-linejoin="round"/><path d="M385 210 L320 520 L250 840" fill="none" stroke="#166ef5" stroke-width="108" stroke-linecap="round" stroke-linejoin="round"/><path d="M430 250 L540 240 L530 330 M430 400 L690 380 L620 520 L480 560 L430 420" fill="none" stroke="#166ef5" stroke-width="84" stroke-linecap="round" stroke-linejoin="round"/><path d="M520 570 L560 860" fill="none" stroke="#166ef5" stroke-width="81" stroke-linecap="round" stroke-linejoin="round"/><path d="M610 670 L750 740" fill="none" stroke="#166ef5" stroke-width="68" stroke-linecap="round" stroke-linejoin="round"/><path d="M390 770 L470 745" fill="none" stroke="#166ef5" stroke-width="47" stroke-linecap="round" stroke-linejoin="round"/></g><g transform="translate(530 235) scale(0.08032)"><path d="M140 290 L370 265" fill="none" stroke="#166ef5" stroke-width="81" stroke-linecap="round" stroke-linejoin="round"/><path d="M345 290 L190 560 L45 810" fill="none" stroke="#166ef5" stroke-width="128" stroke-linecap="round" stroke-linejoin="round"/><path d="M290 590 L350 560 L340 770" fill="none" stroke="#166ef5" stroke-width="94" stroke-linecap="round" stroke-linejoin="round"/><path d="M590 155 L755 170 L730 270 L610 440" fill="none" stroke="#166ef5" stroke-width="84" stroke-linecap="round" stroke-linejoin="round"/><path d="M565 240 L520 575" fill="none" stroke="#166ef5" stroke-width="108" stroke-linecap="round" stroke-linejoin="round"/><path d="M570 465 L790 460 Q880 520 880 660 Q850 800 730 830 L560 790" fill="none" stroke="#166ef5" stroke-width="84" stroke-linecap="round" stroke-linejoin="round"/><path d="M455 695 L775 650" fill="none" stroke="#166ef5" stroke-width="81" stroke-linecap="round" stroke-linejoin="round"/></g></svg>
</body></html>
